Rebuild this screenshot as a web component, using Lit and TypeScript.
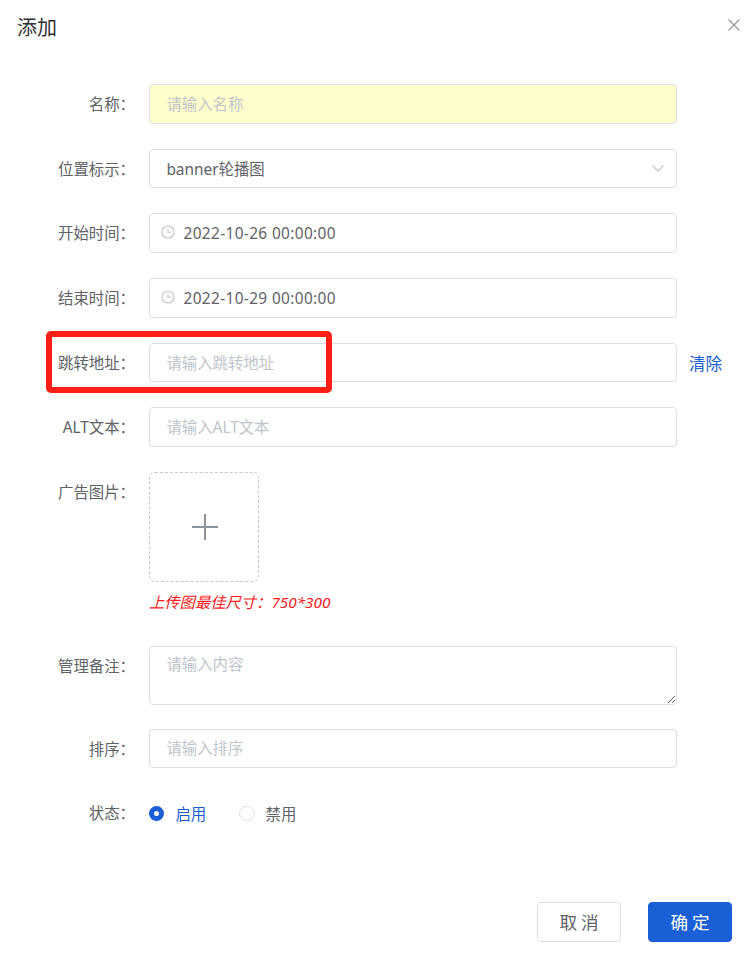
import { LitElement, html, css, nothing } from 'lit';
import { customElement } from 'lit/decorators.js';

const clockIcon = html`<svg class="clock" viewBox="0 0 14 14" width="14" height="14" fill="none" stroke="#c0c4cc" stroke-width="1.1"><circle cx="7" cy="7" r="6"/><path d="M7 3.4V7.3H10.2"/></svg>`;

@customElement('app-root')
export class AppRoot extends LitElement {
  static styles = css`
    :host {
      display: block;
      width: 753px;
      height: 958px;
      background: #fff;
      overflow: hidden;
      font: 400 15.4px 'Noto Sans', 'Noto Sans CJK SC', sans-serif;
      color: #606266;
    }
    .head {
      display: flex;
      justify-content: space-between;
      height: 84px;
      padding: 14px 12px 0 17px;
      box-sizing: border-box;
    }
    .title {
      font-size: 20px;
      line-height: 27px;
      color: #303133;
    }
    .close {
      margin-top: 4px;
    }
    .form {
      display: flex;
      flex-direction: column;
    }
    .row {
      display: flex;
      position: relative;
      margin-bottom: 25.1px;
    }
    .row.flush {
      margin-bottom: 0;
    }
    .row.note {
      margin-bottom: 24px;
    }
    .label {
      flex: none;
      width: 135px;
      height: 39.6px;
      margin-right: 14px;
      text-align: right;
      line-height: 41px;
      white-space: nowrap;
    }
    .box {
      flex: none;
      display: flex;
      align-items: center;
      width: 528px;
      height: 39.6px;
      box-sizing: border-box;
      padding: 0 17px 0 16.4px;
      border: 1px solid #dcdfe6;
      border-radius: 4px;
      background: #fff;
    }
    .box input {
      flex: 1;
      min-width: 0;
      border: none;
      outline: none;
      padding: 1px 0 0;
      background: transparent;
      font: inherit;
      color: #606266;
    }
    input::placeholder,
    textarea::placeholder {
      color: #c0c4cc;
      opacity: 1;
    }
    .box.auto {
      background: #ffffcc;
    }
    .box.date {
      padding-left: 11px;
    }
    .box.date input {
      letter-spacing: 0.37px;
    }
    .clock {
      flex: none;
      margin-right: 8.5px;
      margin-top: -2px;
    }
    .chevron {
      flex: none;
      margin-right: -6px;
    }
    .clear {
      margin-left: 12px;
      line-height: 41px;
      height: 39.6px;
      font-size: 16.5px;
      color: #1a5fd6;
    }
    .mark {
      position: absolute;
      left: 46px;
      top: -12px;
      width: 286px;
      height: 62px;
      box-sizing: border-box;
      border: 6px solid #ff1f16;
      border-radius: 5px;
      pointer-events: none;
    }
    .upload-col {
      display: flex;
      flex-direction: column;
    }
    .upload {
      display: flex;
      align-items: center;
      justify-content: center;
      width: 110px;
      height: 110px;
      box-sizing: border-box;
      padding-left: 2px;
      border: 1px dashed #c8c8c8;
      border-radius: 6px;
    }
    .hint {
      margin-top: 9px;
      margin-bottom: 32.4px;
      line-height: 22px;
      font-size: 15.3px;
      font-style: italic;
      color: #ff1a1a;
    }
    textarea {
      display: block;
      width: 528px;
      height: 59px;
      box-sizing: border-box;
      padding: 6px 17px 6px 16.4px;
      border: 1px solid #dcdfe6;
      border-radius: 4px;
      outline: none;
      font: inherit;
      line-height: 23px;
      color: #606266;
      resize: vertical;
    }
    .radios {
      display: flex;
      align-items: center;
      height: 39.6px;
      padding-top: 1px;
      box-sizing: border-box;
    }
    .radio {
      display: flex;
      align-items: center;
      margin-right: 33px;
    }
    .dot {
      flex: none;
      width: 15.4px;
      height: 15.4px;
      box-sizing: border-box;
      margin-right: 11px;
      border: 1px solid #dcdfe6;
      border-radius: 50%;
      background: #fff;
    }
    .radio.on {
      color: #1a5fd6;
    }
    .radio.on .dot {
      border: 5.2px solid #1a5fd6;
    }
    .foot {
      display: flex;
      justify-content: flex-end;
      gap: 27px;
      padding: 69px 21px 0 0;
    }
    .btn {
      width: 84px;
      height: 40px;
      box-sizing: border-box;
      border: 1px solid #dcdfe6;
      border-radius: 4px;
      background: #fff;
      padding: 0 0 0 4px;
      font: inherit;
      font-size: 17.6px;
      letter-spacing: 4px;
      color: #606266;
    }
    .btn.primary {
      border-color: #1a5fd6;
      background: #1a5fd6;
      color: #fff;
    }
  `;

  private field(label: string, placeholder: string, extra: unknown = nothing) {
    return html`
      <div class="row">
        <div class="label">${label}：</div>
        <div class="box"><input placeholder=${placeholder} /></div>
        ${extra}
      </div>
    `;
  }

  private dateField(label: string, value: string) {
    return html`
      <div class="row">
        <div class="label">${label}：</div>
        <div class="box date">${clockIcon}<input .value=${value} /></div>
      </div>
    `;
  }

  render() {
    return html`
      <div class="head">
        <div class="title">添加</div>
        <svg class="close" viewBox="0 0 14 14" width="14" height="14" fill="none" stroke="#909399" stroke-width="1.1"><path d="M1.5 1.5L12.5 12.5M12.5 1.5L1.5 12.5"/></svg>
      </div>
      <div class="form">
        <div class="row">
          <div class="label">名称：</div>
          <div class="box auto"><input placeholder="请输入名称" /></div>
        </div>
        <div class="row">
          <div class="label">位置标示：</div>
          <div class="box">
            <input .value=${'banner轮播图'} />
            <svg class="chevron" viewBox="0 0 14 14" width="14" height="14" fill="none" stroke="#c0c4cc" stroke-width="1.2"><path d="M1.5 4.5L7 10L12.5 4.5"/></svg>
          </div>
        </div>
        ${this.dateField('开始时间', '2022-10-26 00:00:00')}
        ${this.dateField('结束时间', '2022-10-29 00:00:00')}
        ${this.field('跳转地址', '请输入跳转地址', html`<div class="clear">清除</div><div class="mark"></div>`)}
        ${this.field('ALT文本', '请输入ALT文本')}
        <div class="row flush">
          <div class="label">广告图片：</div>
          <div class="upload-col">
            <div class="upload">
              <svg viewBox="0 0 26 26" width="26" height="26" fill="none" stroke="#8c939d" stroke-width="2"><path d="M13 0V26M0 13H26"/></svg>
            </div>
            <div class="hint">上传图最佳尺寸：750*300</div>
          </div>
        </div>
        <div class="row note">
          <div class="label">管理备注：</div>
          <textarea placeholder="请输入内容"></textarea>
        </div>
        ${this.field('排序', '请输入排序')}
        <div class="row flush">
          <div class="label">状态：</div>
          <div class="radios">
            <div class="radio on"><span class="dot"></span>启用</div>
            <div class="radio"><span class="dot"></span>禁用</div>
          </div>
        </div>
      </div>
      <div class="foot">
        <button class="btn">取消</button>
        <button class="btn primary">确定</button>
      </div>
    `;
  }
}
